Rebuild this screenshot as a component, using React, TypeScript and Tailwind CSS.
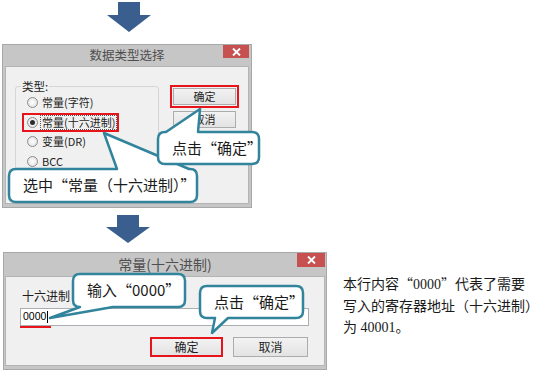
import React from 'react';

const TEAL = '#31849b';

function calloutPath(
  w: number,
  h: number,
  r: number,
  side: 'top' | 'bottom',
  b1: number,
  b2: number,
  tx: number,
  ty: number
) {
  const top = side === 'top' ? `L${b1},0 L${tx},${ty} L${b2},0 ` : '';
  const bottom = side === 'bottom' ? `L${b2},${h} L${tx},${ty} L${b1},${h} ` : '';
  return `M${r},0 ${top}L${w - r},0 Q${w},0 ${w},${r} L${w},${h - r} Q${w},${h} ${w - r},${h} ${bottom}L${r},${h} Q0,${h} 0,${h - r} L0,${r} Q0,0 ${r},0 Z`;
}

type CalloutProps = {
  className: string;
  w: number;
  h: number;
  side: 'top' | 'bottom';
  b1: number;
  b2: number;
  tx: number;
  ty: number;
  children: React.ReactNode;
};

function Callout({ className, w, h, side, b1, b2, tx, ty, children }: CalloutProps) {
  return (
    <div className={`absolute ${className}`}>
      <svg
        width={w}
        height={h}
        overflow="visible"
        className="absolute left-0 top-0 overflow-visible"
      >
        <path
          d={calloutPath(w, h, 7, side, b1, b2, tx, ty)}
          fill="#ffffff"
          stroke={TEAL}
          strokeWidth={2.5}
          strokeLinejoin="round"
        />
      </svg>
      <div className="relative h-full flex items-center pl-[14px] text-[15px] text-[#1b1b1b] whitespace-nowrap">
        {children}
      </div>
    </div>
  );
}

function CloseX() {
  return (
    <svg width="9" height="8" viewBox="0 0 9 8" className="block">
      <path d="M1,0.5 L8,7.5 M8,0.5 L1,7.5" stroke="#ffffff" strokeWidth="1.9" />
    </svg>
  );
}

function Radio({ checked }: { checked?: boolean }) {
  return (
    <div className="w-[11px] h-[11px] rounded-full border border-[#8c8c8c] bg-radial from-[#ffffff] to-[#dcdcdc] flex items-center justify-center shrink-0">
      {checked && <div className="w-[5px] h-[5px] rounded-full bg-[#2b2b2b]" />}
    </div>
  );
}

export default function App() {
  return (
    <div className="relative w-[550px] h-[373px] overflow-hidden bg-white font-['Noto_Sans_CJK_SC',sans-serif]">
      <div className="flex flex-col">
        {/* arrow 1 */}
        <div className="pt-[2px] pl-[107px] h-[32px]">
          <svg width="44" height="30" viewBox="0 0 44 30" className="block">
            <path d="M11,0 H33 V13 H44 L22,30 L0,13 H11 Z" fill="#3a5f8f" />
          </svg>
        </div>

        {/* dialog 1 */}
        <div className="ml-[2px] mt-[12px] w-[250px] h-[164px] bg-[#c6c6c6] border border-[#a8a8a8] flex flex-col px-[2px] pb-[3px]">
          <div className="h-[21px] relative flex items-center justify-center text-[12.5px] text-[#4f4f4f]">
            数据类型选择
            <div className="absolute right-0 top-0 w-[26px] h-[13px] bg-[#c75050] flex items-center justify-center">
              <CloseX />
            </div>
          </div>
          <div className="flex-1 bg-[#f0f0f0] border border-[#b4b4b4] flex items-start">
            <fieldset className="ml-[9px] mt-[12px] w-[144px] h-[99px] border border-[#d6d6d6] rounded-[3px]">
              <legend className="ml-[5px] px-[1px] text-[11.5px] leading-[14px] text-[#1e1e1e]">类型:</legend>
              <div className="flex flex-col text-[11px] text-[#1e1e1e]">
                <div className="h-[19.5px] flex items-center pl-[11px] gap-[3px]">
                  <Radio />
                  <span className="px-[1px] leading-[13px]">常量(字符)</span>
                </div>
                <div className="relative h-[19.5px] flex items-center pl-[11px] gap-[2px]">
                  <Radio checked />
                  <span className="px-[1px] leading-[13px] border border-dotted border-[#555555]">常量(十六进制)</span>
                  <div className="absolute left-[6px] top-[0.5px] w-[97px] h-[19px] border-2 border-[#e8141b]" />
                </div>
                <div className="h-[19.5px] flex items-center pl-[11px] gap-[3px]">
                  <Radio />
                  <span className="px-[1px] leading-[13px]">变量(DR)</span>
                </div>
                <div className="h-[19.5px] flex items-center pl-[11px] gap-[3px]">
                  <Radio />
                  <span className="px-[1px] leading-[13px]">BCC</span>
                </div>
              </div>
            </fieldset>
            <div className="ml-[11px] mt-[18px] flex flex-col">
              <div className="w-[69px] h-[23px] border-2 border-[#e8141b] p-[1px]">
                <div className="w-full h-full border border-[#acacac] bg-linear-to-b from-[#f2f2f2] to-[#e3e3e3] flex items-center justify-center text-[11px] text-[#1e1e1e]">
                  确定
                </div>
              </div>
              <div className="ml-[3px] mt-[3px] w-[63px] h-[17px] border border-[#acacac] bg-linear-to-b from-[#f2f2f2] to-[#e3e3e3] flex items-center justify-center text-[11px] text-[#1e1e1e]">
                取消
              </div>
            </div>
          </div>
        </div>

        {/* arrow 2 */}
        <div className="mt-[7px] pl-[106px] h-[28px]">
          <svg width="44" height="28" viewBox="0 0 44 28" className="block">
            <path d="M11,0 H33 V12 H44 L22,28 L0,12 H11 Z" fill="#3a5f8f" />
          </svg>
        </div>

        {/* dialog 2 row */}
        <div className="mt-[9px] flex items-start">
          <div className="ml-[3px] w-[324px] h-[118px] bg-[#c6c6c6] border border-[#a8a8a8] flex flex-col px-[1px] pb-[3px]">
            <div className="h-[23px] relative flex items-center justify-center text-[14px] text-[#4f4f4f]">
              常量(十六进制)
              <div className="absolute right-0 top-0 w-[28px] h-[14px] bg-[#c75050] flex items-center justify-center">
                <CloseX />
              </div>
            </div>
            <div className="flex-1 bg-[#f0f0f0] border border-[#b4b4b4] flex flex-col">
              <div className="ml-[16px] mt-[11px] text-[12px] leading-[16px] text-[#1e1e1e]">十六进制</div>
              <div className="relative ml-[14px] mt-[4px] w-[289px] h-[18px] border border-[#abadb3] bg-white flex items-center pl-[2px] font-['Liberation_Sans',sans-serif] text-[10.5px] text-black">
                <span>0000</span>
                <span className="ml-[1px] w-[1px] h-[12px] bg-black" />
                <div className="absolute left-[-1px] bottom-[-3px] w-[31px] h-[2px] bg-[#e8141b]" />
              </div>
              <div className="mt-[11px] ml-[144px] flex gap-[10px]">
                <div className="w-[73px] h-[20px] border-2 border-[#e8141b] bg-linear-to-b from-[#f2f2f2] to-[#e3e3e3] flex items-center justify-center text-[12px] text-[#1e1e1e]">
                  确定
                </div>
                <div className="w-[75px] h-[20px] border border-[#acacac] bg-linear-to-b from-[#f2f2f2] to-[#e3e3e3] flex items-center justify-center text-[12px] text-[#1e1e1e]">
                  取消
                </div>
              </div>
            </div>
          </div>

          <div className="ml-[16px] mt-[21px] text-[14px] leading-[21.5px] text-[#1a1a1a] whitespace-nowrap font-['Liberation_Serif','Noto_Sans_CJK_SC',serif]">
            <div>
              本行内容<span className="font-['Noto_Sans_CJK_SC',sans-serif]">“</span>0000<span className="font-['Noto_Sans_CJK_SC',sans-serif]">”</span>代表了需要
            </div>
            <div>写入的寄存器地址（十六进制）</div>
            <div>为 40001。</div>
          </div>
        </div>
      </div>

      {/* callouts */}
      <Callout className="left-[9px] top-[169px] w-[188px] h-[33px]" w={188} h={33} side="top" b1={108} b2={180} tx={95} ty={-36}>
        选中“常量（十六进制）”
      </Callout>
      <Callout className="left-[158px] top-[132px] w-[101px] h-[32px]" w={101} h={32} side="top" b1={8} b2={40} tx={42} ty={-23}>
        点击“确定”
      </Callout>
      <Callout className="left-[73px] top-[274px] w-[112px] h-[33px]" w={112} h={33} side="bottom" b1={7} b2={40} tx={-23} ty={44}>
        输入“0000”
      </Callout>
      <Callout className="left-[200px] top-[286px] w-[103px] h-[32px]" w={103} h={32} side="bottom" b1={15} b2={28} tx={12} ty={47}>
        点击“确定”
      </Callout>
    </div>
  );
}
